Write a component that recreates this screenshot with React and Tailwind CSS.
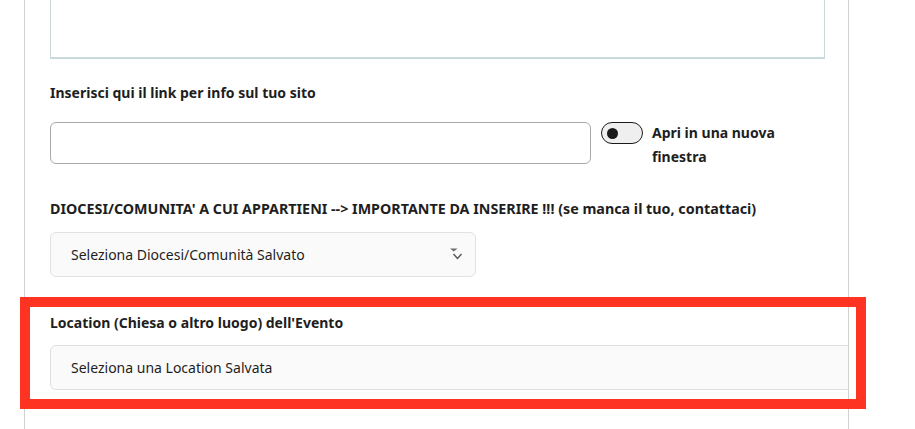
import React from 'react';

function SelectArrow() {
  return (
    <svg width="16" height="14" viewBox="0 0 16 14" className="shrink-0">
      <path d="M1 0.5 H8.5 L4.75 3.5 Z" fill="#6b6b6b" />
      <path d="M4.5 6 L8.5 10.5 L12.5 6" fill="none" stroke="#555" strokeWidth="1.4" />
    </svg>
  );
}

export default function App() {
  return (
    <div
      className="relative h-[429px] w-full overflow-hidden bg-white text-[#1e1e1e]"
      style={{ fontFamily: '"Noto Sans", "Open Sans", sans-serif' }}
    >
      <div className="ml-[24px] h-full w-[825px] overflow-hidden border-x border-[#d2d2d2] pl-[25px] pr-[23px]">
        {/* textarea (scrolled, only bottom visible) */}
        <div className="h-[59px] w-[775px] border border-t-0 border-[#c9dada] border-b-2 bg-white" />

        <div className="mt-[24px] text-[14px] leading-[20px] font-bold">
          Inserisci qui il link per info sul tuo sito
        </div>

        <div className="mt-[19px] flex items-start">
          <div className="h-[42px] w-[541px] rounded-[6px] border border-[#a9a9a9] bg-white" />
          <div className="ml-[10px] flex h-[22px] w-[42px] items-center rounded-full border-[1.5px] border-[#1a1a1a] bg-[#efefef] pl-[5px]">
            <div className="h-[11px] w-[11px] rounded-full bg-[#1a1a1a]" />
          </div>
          <div className="ml-[9px] -mt-[1px] w-[140px] text-[14px] leading-[24px] font-bold">
            Apri in una nuova finestra
          </div>
        </div>

        <div className="mt-[30px] whitespace-nowrap text-[14.3px] leading-[20px] font-bold">
          DIOCESI/COMUNITA' A CUI APPARTIENI --&gt; IMPORTANTE DA INSERIRE !!! (se manca il tuo, contattaci)
        </div>

        <div className="mt-[13px] flex h-[45px] w-[426px] items-center justify-between rounded-[6px] border border-[#e2e2e2] bg-[#fafafa] pl-[20px] pr-[10px]">
          <span className="text-[14px]">Seleziona Diocesi/Comunità Salvato</span>
          <SelectArrow />
        </div>

        <div className="mt-[36px] text-[14px] leading-[20px] font-bold">
          Location (Chiesa o altro luogo) dell'Evento
        </div>

        <div className="mt-[12px] flex h-[45px] w-[820px] shrink-0 items-center rounded-[6px] border border-[#dedede] bg-[#fafafa] pl-[20px]">
          <span className="text-[14px]">Seleziona una Location Salvata</span>
        </div>
      </div>

      {/* red annotation box */}
      <div className="pointer-events-none absolute left-[20px] top-[297px] h-[112px] w-[846px] border-[10px] border-[#ff3322]" />
    </div>
  );
}
